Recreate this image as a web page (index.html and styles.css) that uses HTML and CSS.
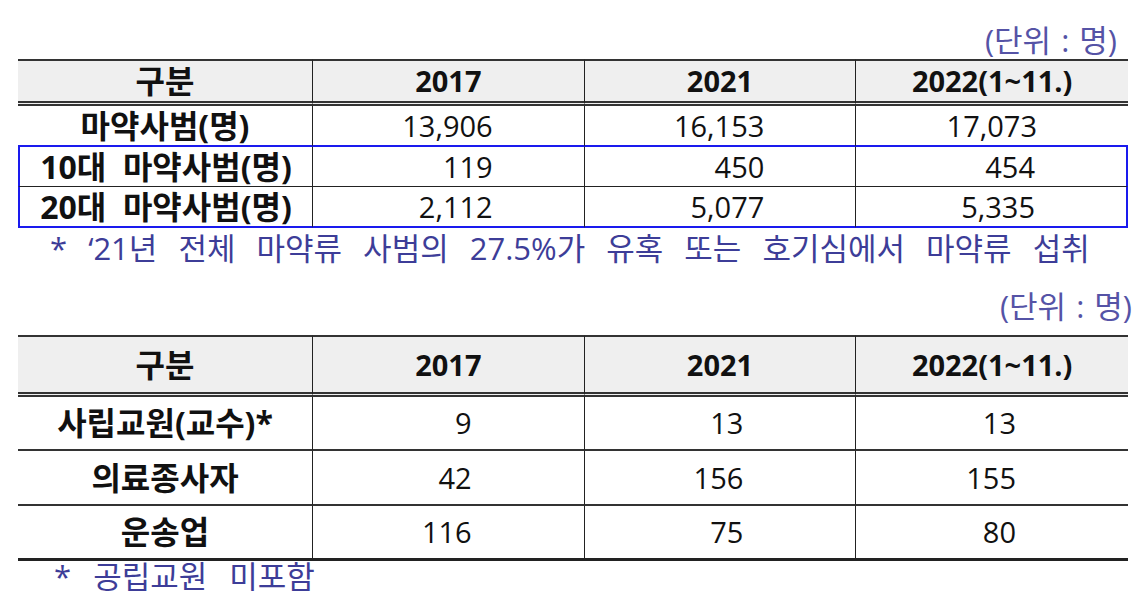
FILE: index.html
```html
<!DOCTYPE html>
<html lang="ko">
<head>
<meta charset="utf-8">
<link rel="stylesheet" href="styles.css">
</head>
<body>
<div class="page">
  <div class="unit unit-first">(단위 : 명)</div>
  <table class="stat stat-a">
    <colgroup><col class="c-label"><col class="c-num"><col class="c-num"><col class="c-num"></colgroup>
    <thead>
      <tr><th class="ko">구분</th><th>2017</th><th>2021</th><th class="last">2022(1~11.)</th></tr>
    </thead>
    <tbody>
      <tr class="pre-box"><td class="label">마약사범(명)</td><td>13,906</td><td>16,153</td><td class="last">17,073</td></tr>
      <tr class="box box-top"><td class="label">10대&nbsp;&nbsp;마약사범(명)</td><td>119</td><td>450</td><td class="last">454</td></tr>
      <tr class="box box-bottom"><td class="label">20대&nbsp;&nbsp;마약사범(명)</td><td>2,112</td><td>5,077</td><td class="last">5,335</td></tr>
    </tbody>
  </table>
  <p class="note note-first">* ‘21년 전체 마약류 사범의 27.5%가 유혹 또는 호기심에서 마약류 섭취</p>
  <div class="unit unit-second">(단위 : 명)</div>
  <table class="stat stat-b">
    <colgroup><col class="c-label"><col class="c-num"><col class="c-num"><col class="c-num"></colgroup>
    <thead>
      <tr><th class="ko">구분</th><th>2017</th><th>2021</th><th class="last">2022(1~11.)</th></tr>
    </thead>
    <tbody>
      <tr class="r1"><td class="label">사립교원(교수)*</td><td>9</td><td>13</td><td class="last">13</td></tr>
      <tr class="r2"><td class="label">의료종사자</td><td>42</td><td>156</td><td class="last">155</td></tr>
      <tr class="r3"><td class="label">운송업</td><td>116</td><td>75</td><td class="last">80</td></tr>
    </tbody>
  </table>
  <p class="note note-second">* 공립교원 미포함</p>
</div>
</body>
</html>
```

FILE: styles.css
```css
html, body {
  margin: 0;
  padding: 0;
  background: #ffffff;
}

body {
  font-family: "Open Sans", "Noto Sans CJK KR", sans-serif;
  font-size: 29px;
  color: #111111;
}

.page {
  width: 1110px;
  padding-left: 18px;
}

.unit {
  text-align: right;
  line-height: 30px;
  font-size: 31px;
  color: #5553a6;
  word-spacing: 2px;
  box-sizing: border-box;
}

.unit-first {
  height: 59px;
  padding-top: 25px;
  padding-right: 11px;
}

.unit-second {
  height: 65px;
  padding-top: 21px;
  margin-right: -4px;
}

.note {
  margin: 0;
  line-height: 30px;
  font-size: 31px;
  color: #3d3d98;
  box-sizing: border-box;
}

.note-first {
  height: 42px;
  padding-top: 5px;
  padding-left: 32px;
  word-spacing: 13px;
}

.note-second {
  padding-left: 36px;
  word-spacing: 14px;
}

.stat {
  width: 1110px;
  table-layout: fixed;
  border-collapse: separate;
  border-spacing: 0;
}

.c-label { width: 295px; }
.c-num { width: 271.6px; }

.stat th,
.stat td {
  box-sizing: border-box;
  padding: 0;
  line-height: 30px;
  border-right: 1px solid #222222;
  border-bottom: 2px solid #333333;
}

.stat th.last,
.stat td.last {
  border-right: none;
}

.stat th {
  background: #efefef;
  font-weight: 700;
  text-align: center;
  border-top: 2px solid #333333;
  border-bottom: 5px double #333333;
}

.stat th.ko {
  font-size: 32px;
}

.stat td {
  text-align: right;
  font-weight: 400;
}

.stat td.label {
  text-align: center;
  font-weight: 700;
  font-size: 32px;
}

/* table A */
.stat-a th { height: 47px; }
.stat-a td { height: 41px; padding-right: 91px; }
.stat-a td.label { padding-right: 0; }

.stat-a tr.pre-box td { border-bottom: 2px solid #1a1aee; }
.stat-a tr.box-top td { border-bottom: 1px solid #222222; height: 40px; }
.stat-a tr.box-bottom td { border-bottom: 2px solid #1a1aee; }
.stat-a tr.box td.label { border-left: 2px solid #1a1aee; }
.stat-a tr.box td.last { border-right: 2px solid #1a1aee; }

/* table B */
.stat-b th { height: 62px; }
.stat-b td { padding-right: 112px; }
.stat-b td.label { padding-right: 0; }
.stat-b tr.r1 td { height: 54px; }
.stat-b tr.r2 td { height: 55px; }
.stat-b tr.r3 td { height: 55px; border-bottom: 3px solid #222222; }
```
